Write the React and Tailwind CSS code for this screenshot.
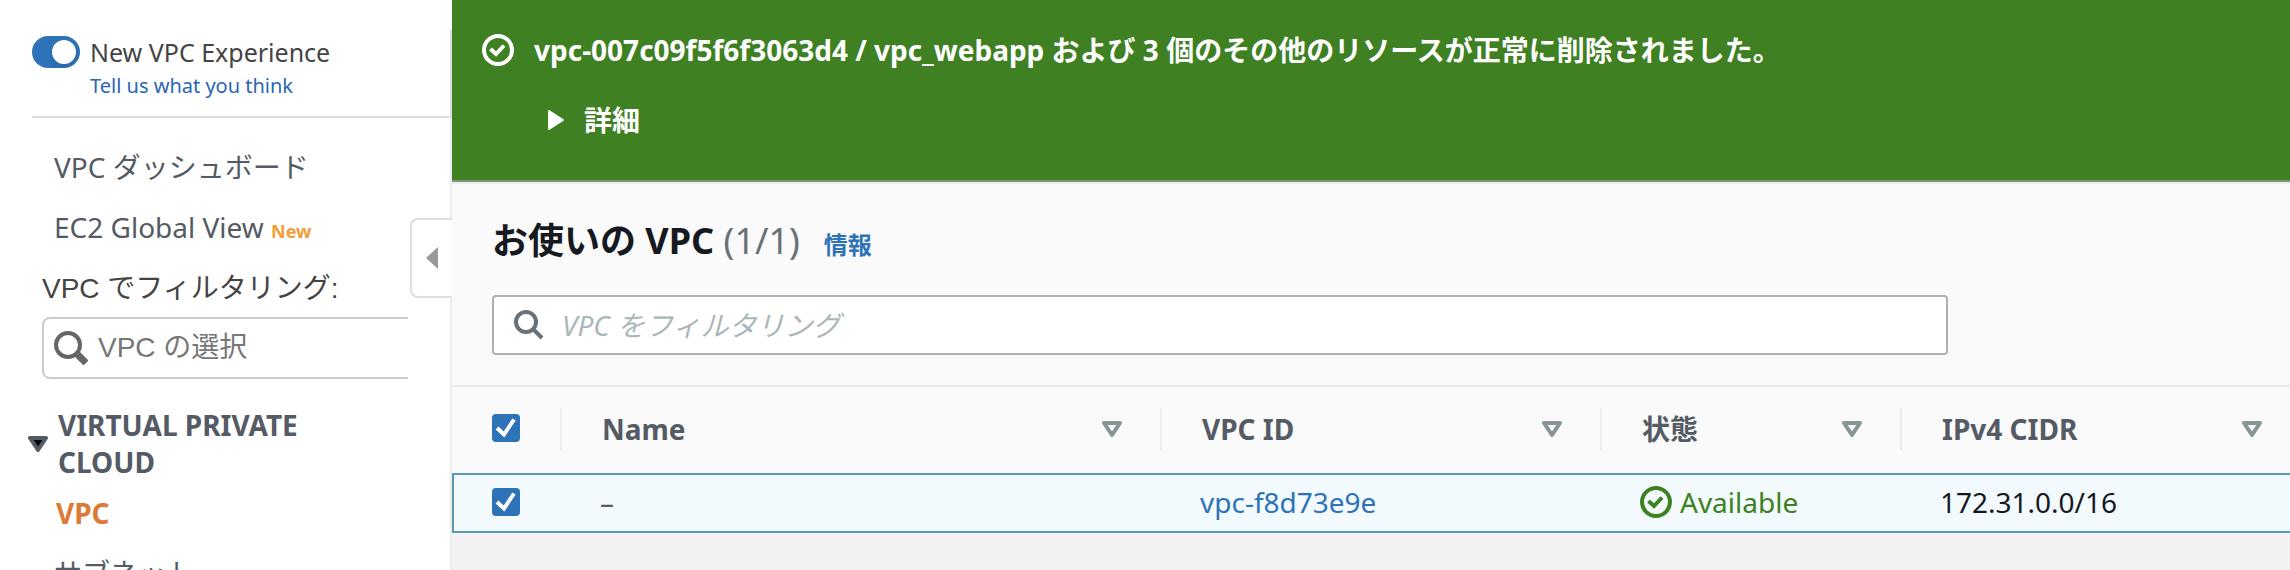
import React, { useState } from "react";

const columns = [
  { key: "name", label: "Name", width: "w-[600px] pr-[38px]" },
  { key: "vpcId", label: "VPC ID", width: "w-[440px] pr-[38px]" },
  { key: "state", label: "状態", width: "w-[300px] pr-[38px]" },
  { key: "cidr", label: "IPv4 CIDR", width: "pr-7" },
];

const vpcs = [
  { id: "vpc-f8d73e9e", name: "–", state: "Available", cidr: "172.31.0.0/16" },
];

function CheckCircle({ className }) {
  return (
    <svg viewBox="0 0 32 32" className={className} fill="none" stroke="currentColor" strokeWidth="4" aria-hidden="true">
      <circle cx="16" cy="16" r="14" />
      <path d="M8.5 15l5.5 5 8-8.5" />
    </svg>
  );
}

function SortIcon() {
  return (
    <svg viewBox="0 0 20 16" className="w-5 h-4" fill="none" stroke="#879596" strokeWidth="4" strokeLinejoin="round" aria-hidden="true">
      <path d="M2 2h16l-8 12z" />
    </svg>
  );
}

function Checkbox({ checked, onChange, label }) {
  return (
    <span className="grid size-7">
      <input
        type="checkbox"
        aria-label={label}
        checked={checked}
        onChange={onChange}
        className="col-start-1 row-start-1 size-7 appearance-none rounded-sm border-2 border-[#687078] bg-white checked:border-[#2e73b8] checked:bg-[#2e73b8]"
      />
      {checked && (
        <svg viewBox="0 0 28 28" className="col-start-1 row-start-1 size-7 pointer-events-none" fill="none" stroke="#fff" strokeWidth="4" aria-hidden="true">
          <path d="M5 14l7 6.5L22 5.5" />
        </svg>
      )}
    </span>
  );
}

function Sidebar() {
  const [newUi, setNewUi] = useState(true);

  return (
    <aside className="relative w-[452px] shrink-0 flex flex-col bg-white pt-[30px] text-[#545b64]">
      <div className="ml-8 h-[88px] shrink-0 border-b-2 border-r-2 border-[#dcdcdc] pt-[2px]">
        <label className="flex items-center gap-[10px] leading-10 text-[25px] text-[#444]">
          <input
            type="checkbox"
            role="switch"
            checked={newUi}
            onChange={(e) => setNewUi(e.target.checked)}
            className="h-8 w-12 appearance-none rounded-full bg-[#aab7b8] px-1 py-1 checked:bg-[#2e73b8] before:block before:size-6 before:rounded-full before:bg-white before:shadow-md checked:before:ml-4"
          />
          New VPC Experience
        </label>
        <a href="#feedback" className="ml-[58px] block text-xl leading-7 text-[#2a66b4]">
          Tell us what you think
        </a>
      </div>

      <nav className="flex-1 border-r-2 border-[#ececec] pt-[29px] text-[28px] leading-10">
        <a href="#dashboard" className="ml-[54px] block">VPC ダッシュボード</a>
        <a href="#global" className="ml-[54px] mt-5 block">
          EC2 Global View <span className="text-lg font-bold text-[#f29d38]">New</span>
        </a>

        <div className="ml-[42px] mr-[42px] mt-[22px] font-['Liberation_Sans','Noto_Sans_CJK_JP',sans-serif]">
          <label htmlFor="vpc-select" className="block text-[#444]">VPC でフィルタリング:</label>
          <div className="mt-2 flex h-[62px] items-center gap-[10px] rounded-l-lg border-2 border-r-0 border-[#ccc] pl-[10px]">
            <svg viewBox="0 0 34 34" className="size-[34px] shrink-0" fill="none" stroke="#666" aria-hidden="true">
              <circle cx="14" cy="14" r="12" strokeWidth="4" />
              <path d="M22 22l10 10" strokeWidth="7" />
            </svg>
            <input id="vpc-select" placeholder="VPC の選択" className="w-full min-w-0 outline-none placeholder:text-[#777]" />
          </div>
        </div>

        <button className="ml-7 mt-7 flex items-center gap-[10px] text-left font-bold leading-[37px]">
          <svg viewBox="0 0 20 16" className="w-5 h-4 shrink-0" aria-hidden="true">
            <path d="M2 2h16l-8 12z" fill="#000" stroke="#545b64" strokeWidth="4" strokeLinejoin="round" />
          </svg>
          <span className="w-64">VIRTUAL PRIVATE CLOUD</span>
        </button>
        <a href="#vpcs" className="ml-14 mt-3 block font-bold text-[#dd7a35]">VPC</a>
        <a href="#subnets" className="ml-[54px] mt-5 block">サブネット</a>
      </nav>

      <button
        aria-label="サイドバーを閉じる"
        className="absolute right-0 top-[218px] flex h-20 w-[42px] items-center justify-center rounded-l-lg border-2 border-r-0 border-[#dedede] bg-white"
      >
        <svg viewBox="0 0 12 22" className="h-[22px] w-3" aria-hidden="true">
          <path d="M12 0v22L0 11z" fill="#999" />
        </svg>
      </button>
    </aside>
  );
}

function SuccessBanner() {
  return (
    <section className="flex h-[182px] gap-5 border-b-2 border-[#7f957c] bg-[#3e8022] pl-[30px] pt-[34px] font-bold text-white">
      <CheckCircle className="size-8 shrink-0" />
      <div>
        <p className="leading-8">
          vpc-007c09f5f6f3063d4 / vpc_webapp および 3 個のその他のリソースが正常に削除されました。
        </p>
        <button className="ml-[14px] mt-9 flex items-center gap-5 leading-9">
          <svg viewBox="0 0 16 20" className="h-5 w-4" aria-hidden="true">
            <path d="M1 1v18L15 10z" fill="currentColor" stroke="currentColor" strokeWidth="2" strokeLinejoin="round" />
          </svg>
          詳細
        </button>
      </div>
    </section>
  );
}

export default function App() {
  const [query, setQuery] = useState("");
  const [selected, setSelected] = useState([vpcs[0].id]);

  const rows = vpcs.filter((v) => v.id.includes(query));

  function toggle(id) {
    setSelected((s) => (s.includes(id) ? s.filter((x) => x !== id) : [...s, id]));
  }

  function toggleAll() {
    setSelected(selected.length === vpcs.length ? [] : vpcs.map((v) => v.id));
  }

  return (
    <div className="flex h-screen overflow-hidden bg-[#f2f2f2] text-[28px] text-[#16191f] font-['Noto_Sans','Noto_Sans_CJK_JP',sans-serif]">
      <Sidebar />

      <main className="min-w-0 flex-1">
        <SuccessBanner />

        <div className="border-t-2 border-[#eaeded] bg-[#fafafa]">
          <header className="px-10 pb-[30px] pt-8">
            <div className="flex items-baseline">
              <h1 className="text-4xl leading-[50px] font-bold">
                お使いの VPC <span className="font-normal text-[#687078]">({selected.length}/{vpcs.length})</span>
              </h1>
              <a href="#info" className="ml-6 text-2xl font-bold text-[#2e73b8]">情報</a>
            </div>

            {/* Filtro */}
            <label className="mt-[29px] flex h-[60px] w-full max-w-[1456px] items-center gap-[18px] rounded-sm border-2 border-[#aab2b3] bg-white px-5">
              <svg viewBox="0 0 30 30" className="size-[30px] shrink-0" fill="none" stroke="#687078" strokeWidth="4" aria-hidden="true">
                <circle cx="12" cy="12" r="10" />
                <path d="M19 19l9 9" />
              </svg>
              <input
                aria-label="VPC をフィルタリング"
                placeholder="VPC をフィルタリング"
                value={query}
                onChange={(e) => setQuery(e.target.value)}
                className="w-full outline-none placeholder:italic placeholder:text-[#aab7b8]"
              />
            </label>
          </header>

          {/* Lista de VPC */}
          <table className="w-full table-fixed border-t-2 border-separate border-spacing-0 border-[#eaeded] text-left">
            <thead>
              <tr className="h-[86px] text-[#545b64]">
                <th className="w-[108px] pb-1 pl-10">
                  <Checkbox checked={selected.length === vpcs.length} onChange={toggleAll} label="すべて選択" />
                </th>
                {columns.map((c) => (
                  <th key={c.key} className={`pb-[2px] ${c.width}`}>
                    <div className="flex h-[42px] items-center justify-between border-l-2 border-[#eaeded] pl-10">
                      {c.label}
                      <button aria-label={`${c.label} 並べ替え`}>
                        <SortIcon />
                      </button>
                    </div>
                  </th>
                ))}
              </tr>
            </thead>
            <tbody>
              {rows.map((v) => (
                <tr key={v.id} className="h-[60px] bg-[#f2fafd] leading-9 *:border-y-2 *:border-[#5a9ab5] *:pb-[2px]">
                  <td className="border-l-2 pl-[38px]">
                    <Checkbox checked={selected.includes(v.id)} onChange={() => toggle(v.id)} label={v.id} />
                  </td>
                  <td className="pl-10 text-[#545b64]">{v.name}</td>
                  <td className="pl-10">
                    <a href={`#${v.id}`} className="text-[#2e73b8]">{v.id}</a>
                  </td>
                  <td className="pl-10">
                    <div className="flex items-center gap-2 text-[#3e8022]">
                      <CheckCircle className="size-8" />
                      {v.state}
                    </div>
                  </td>
                  <td className="pl-10">{v.cidr}</td>
                </tr>
              ))}
            </tbody>
          </table>
        </div>
      </main>
    </div>
  );
}
